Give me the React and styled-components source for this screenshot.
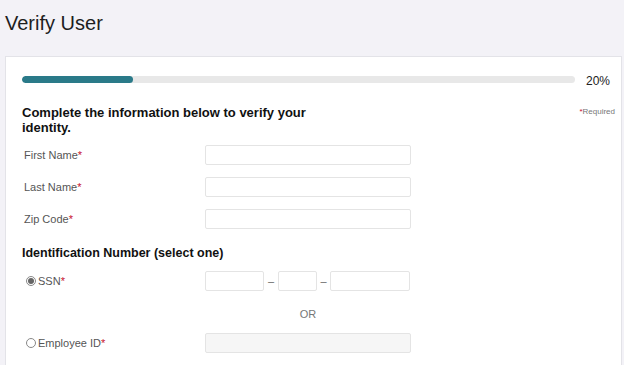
import React from 'react';
import styled, { createGlobalStyle } from 'styled-components';

const GlobalStyle = createGlobalStyle`
  body {
    margin: 0;
    background: #f3f2f7;
    font-family: 'Liberation Sans', Arial, sans-serif;
  }
`;

const Page = styled.div`
  width: 624px;
  height: 365px;
  overflow: hidden;
`;

const Header = styled.h1`
  margin: 0;
  padding: 12px 0 0 5px;
  height: 44px;
  box-sizing: border-box;
  font-size: 20px;
  font-weight: normal;
  color: #1e1e1e;
`;

const Card = styled.div`
  margin: 12px 2px 0 5px;
  background: #fff;
  border: 1px solid #e3e3e8;
  padding: 13px 6px 20px 16px;
  height: 320px;
`;

const ProgressRow = styled.div`
  display: flex;
  align-items: center;
  gap: 11px;
`;

const Track = styled.div`
  width: 553px;
  height: 7px;
  border-radius: 4px;
  background: #e8e8e8;
  overflow: hidden;
`;

const Fill = styled.div`
  height: 100%;
  border-radius: 4px;
  background: #2a7a89;
`;

const Percent = styled.span`
  font-size: 12px;
  color: #222;
  margin-top: 4px;
`;

const IntroRow = styled.div`
  display: flex;
  justify-content: space-between;
  margin-top: 17px;
`;

const Intro = styled.h2`
  margin: 0;
  width: 300px;
  font-size: 13px;
  line-height: 15px;
  font-weight: bold;
  color: #111;
`;

const Required = styled.span`
  font-size: 8px;
  color: #777;
  margin-top: 2px;
`;

const Star = styled.span`
  color: #c8102e;
`;

const Fields = styled.div`
  margin-top: ${(p) => p.$top}px;
  display: flex;
  flex-direction: column;
  gap: ${(p) => p.$gap || 0}px;
`;

const Row = styled.div`
  display: flex;
  align-items: center;
  height: 20px;
`;

const Label = styled.label`
  width: 183px;
  padding-left: ${(p) => (p.$radio ? '4px' : '2px')};
  box-sizing: border-box;
  font-size: 11px;
  color: #555;
  display: flex;
  align-items: center;
`;

const Input = styled.input`
  width: ${(p) => p.$w || 206}px;
  height: 20px;
  box-sizing: border-box;
  border: 1px solid #e4e4e4;
  border-radius: 2px;
  background: ${(p) => (p.disabled ? '#f6f6f6' : '#fff')};
  padding: 0 4px;
  font-size: 11px;
  outline: none;
`;

const Dash = styled.span`
  width: ${(p) => p.$w || 14}px;
  text-align: center;
  color: #666;
  font-size: 11px;
`;

const SectionTitle = styled.h3`
  margin: 17px 0 0;
  font-size: 12.5px;
  font-weight: bold;
  color: #111;
`;

const Radio = styled.span`
  width: 8px;
  height: 8px;
  border-radius: 50%;
  border: 1px solid #888;
  margin-right: 2px;
  display: inline-flex;
  align-items: center;
  justify-content: center;
  &::after {
    content: '';
    width: 6px;
    height: 6px;
    border-radius: 50%;
    background: ${(p) => (p.$checked ? '#666' : 'transparent')};
  }
`;

const Or = styled.div`
  padding-left: 183px;
  width: 206px;
  text-align: center;
  font-size: 11px;
  color: #777;
  margin: 17px 0 13px;
`;

export default function App() {
  return (
    <Page>
      <GlobalStyle />
      <Header>Verify User</Header>
      <Card>
        <ProgressRow>
          <Track>
            <Fill style={{ width: '20%' }} />
          </Track>
          <Percent>20%</Percent>
        </ProgressRow>
        <IntroRow>
          <Intro>Complete the information below to verify your identity.</Intro>
          <Required><Star>*</Star>Required</Required>
        </IntroRow>
        <Fields $top={10} $gap={12}>
          <Row>
            <Label>First Name<Star>*</Star></Label>
            <Input />
          </Row>
          <Row>
            <Label>Last Name<Star>*</Star></Label>
            <Input />
          </Row>
          <Row>
            <Label>Zip Code<Star>*</Star></Label>
            <Input />
          </Row>
        </Fields>
        <SectionTitle>Identification Number (select one)</SectionTitle>
        <Fields $top={11}>
          <Row>
            <Label $radio><Radio $checked />SSN<Star>*</Star></Label>
            <Input $w={59} />
            <Dash>–</Dash>
            <Input $w={39} />
            <Dash $w={13}>–</Dash>
            <Input $w={80} />
          </Row>
          <Or>OR</Or>
          <Row>
            <Label $radio><Radio />Employee ID<Star>*</Star></Label>
            <Input $w={206} disabled />
          </Row>
        </Fields>
      </Card>
    </Page>
  );
}
